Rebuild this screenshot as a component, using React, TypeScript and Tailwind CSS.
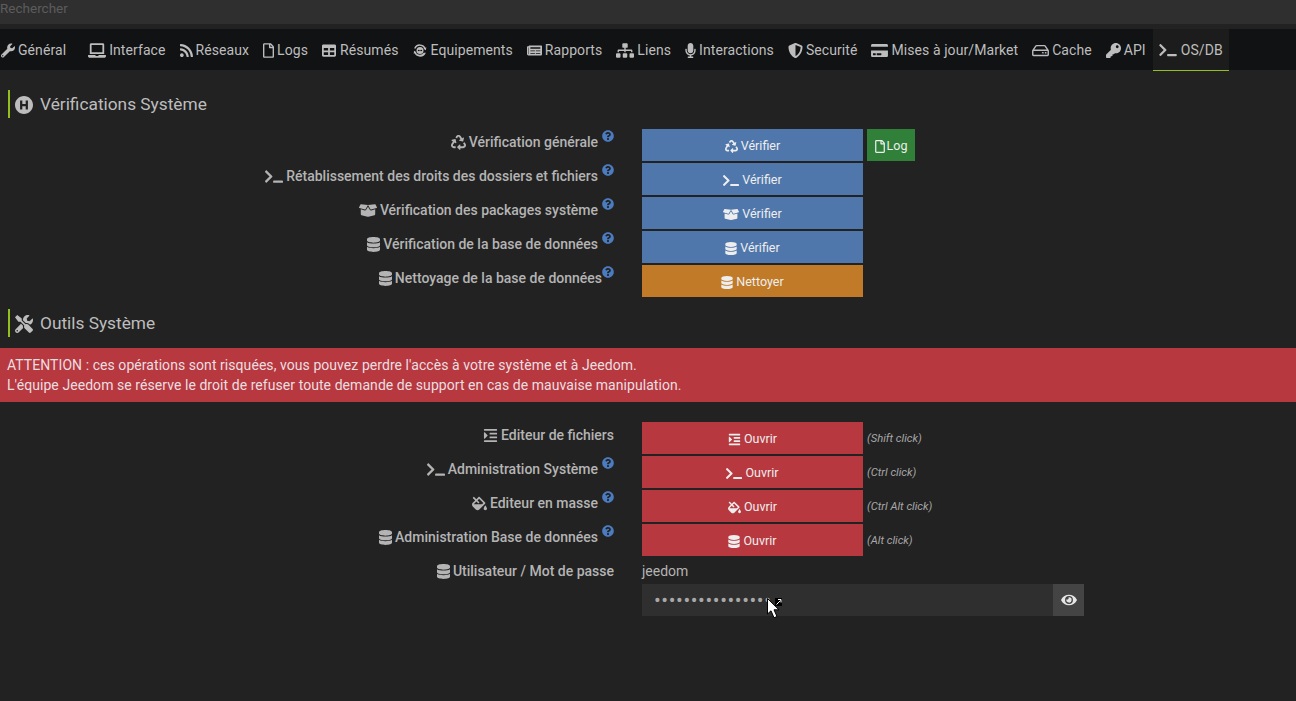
import type { IconType } from "react-icons";
import {
  FaBoxOpen,
  FaCreditCard,
  FaDatabase,
  FaEye,
  FaFillDrip,
  FaHospitalSymbol,
  FaIndent,
  FaKey,
  FaLaptop,
  FaMicrophone,
  FaNewspaper,
  FaQuestionCircle,
  FaRecycle,
  FaRegFile,
  FaRegHdd,
  FaRss,
  FaShieldAlt,
  FaSitemap,
  FaTable,
  FaTerminal,
  FaTools,
  FaWrench,
} from "react-icons/fa";

const EquipIcon: IconType = (props) => (
  <svg viewBox="0 0 16 16" fill="currentColor" {...props}>
    <path d="M8 1a7 7 0 0 1 6.2 3.8l1-.6-.4 3.4-3-1.6 1-.5A5.600 5.600 0 0 0 2.700 6L1.300 5.500A7 7 0 0 1 8 1zM8 15a7 7 0 0 1-6.200-3.800l-1 .6.4-3.400 3 1.600-1 .5a5.600 5.600 0 0 0 9.100 0L14.700 10.500A7 7 0 0 1 8 15z" />
    <circle cx="8" cy="8" r="4" />
    <circle cx="6.300" cy="8" r=".8" fill="#111214" />
    <circle cx="8" cy="8" r=".8" fill="#111214" />
    <circle cx="9.700" cy="8" r=".8" fill="#111214" />
  </svg>
);

const tabs: { label: string; icon: IconType; className: string; iconClass: string }[] = [
  { label: "Général", icon: FaWrench, className: "pl-[1px] pr-[15px]", iconClass: "w-[14px]" },
  { label: "Interface", icon: FaLaptop, className: "px-[7px]", iconClass: "w-[18px]" },
  { label: "Réseaux", icon: FaRss, className: "px-[7px]", iconClass: "w-[13px]" },
  { label: "Logs", icon: FaRegFile, className: "px-[7px]", iconClass: "w-[11px]" },
  { label: "Résumés", icon: FaTable, className: "px-[7px] gap-[4px]", iconClass: "w-[14px]" },
  { label: "Equipements", icon: EquipIcon, className: "px-[7px] gap-[4px]", iconClass: "w-[14px]" },
  { label: "Rapports", icon: FaNewspaper, className: "px-[7px]", iconClass: "w-[15px]" },
  { label: "Liens", icon: FaSitemap, className: "px-[7px]", iconClass: "w-[18px]" },
  { label: "Interactions", icon: FaMicrophone, className: "px-[7px]", iconClass: "w-[11px]" },
  { label: "Securité", icon: FaShieldAlt, className: "px-[7px]", iconClass: "w-[15px]" },
  { label: "Mises à jour/Market", icon: FaCreditCard, className: "px-[7px]", iconClass: "w-[17px]" },
  { label: "Cache", icon: FaRegHdd, className: "px-[7px]", iconClass: "w-[17px]" },
  { label: "API", icon: FaKey, className: "px-[7px]", iconClass: "w-[15px]" },
];

function Heading({ icon: Icon, title }: { icon: IconType; title: string }) {
  return (
    <div className="ml-2 flex h-[28px] items-center border-l-2 border-[#93c01f] pl-[5px] pt-[2px] text-[17.300px] text-[#bdbdbd]">
      <Icon className="mr-[7px] h-[18px] w-[18px]" />
      {title}
    </div>
  );
}

function iconWidth(Icon: IconType) {
  if (Icon === FaTerminal || Icon === FaBoxOpen) return "w-[18px]";
  if (Icon === FaDatabase) return "w-[13px]";
  return "w-[15px]";
}

function Row({
  icon: Icon,
  label,
  help,
  tight,
  children,
}: {
  icon: IconType;
  label: string;
  help?: boolean;
  tight?: boolean;
  children: React.ReactNode;
}) {
  return (
    <div className="flex h-[34px] items-start">
      <div className="flex h-[26px] w-[614px] items-center justify-end font-medium text-[#b4b4b4]">
        <Icon className={`mr-[3px] h-[15px] ${iconWidth(Icon)}`} />
        <span>{label}</span>
        {help && (
          <FaQuestionCircle
            className={`mb-[12px] h-[12px] w-[12px] text-[#4c7cc0] ${tight ? "ml-0" : "ml-[4px]"}`}
          />
        )}
      </div>
      <div className="ml-[28px]">{children}</div>
    </div>
  );
}

function btnIconWidth(Icon: IconType) {
  if (Icon === FaTerminal || Icon === FaBoxOpen) return "w-[16px]";
  if (Icon === FaDatabase) return "w-[12px]";
  return "w-[13px]";
}

function ActionButton({
  icon: Icon,
  label,
  color,
}: {
  icon: IconType;
  label: string;
  color: string;
}) {
  return (
    <button
      className={`flex h-[32px] w-[221px] items-center justify-center gap-[3px] pt-[3px] text-[12.500px] text-[#eeeeee] ${color}`}
    >
      <Icon className={`h-[13px] ${btnIconWidth(Icon)}`} />
      {label}
    </button>
  );
}

export default function App() {
  return (
    <div className="relative h-[701px] w-full overflow-hidden bg-[#222222] text-[14px] font-['Roboto',sans-serif] text-[#bdbdbd]">
      <div className="flex h-[24px] items-start bg-[#2f2f2f] text-[13.500px] leading-[17px] text-[#5c5c5c]">Rechercher</div>

      <nav className="mt-[5px] flex h-[41px] bg-[#111214] tracking-[0.080px]">
        {tabs.map(({ label, icon: Icon, className, iconClass }) => (
          <div key={label} className={`flex items-center gap-[3px] whitespace-nowrap pt-[1px] ${className}`}>
            <Icon className={`h-[15px] ${iconClass}`} />
            {label}
          </div>
        ))}
        <div className="flex h-[42px] items-center gap-[4px] border-b border-[#93c01f] bg-[#1c1c1c] px-[6px] pt-[1px]">
          <FaTerminal className="h-[14px] w-[18px]" />
          OS/DB
        </div>
      </nav>

      <div className="mt-[20px]">
        <Heading icon={FaHospitalSymbol} title="Vérifications Système" />
      </div>

      <div className="mt-[11px]">
        <Row icon={FaRecycle} label="Vérification générale" help>
          <div className="flex gap-[4px]">
            <ActionButton icon={FaRecycle} label="Vérifier" color="bg-[#5077ab]" />
            <button className="flex h-[32px] w-[48px] items-center justify-center gap-[2px] pt-[3px] text-[12.500px] text-[#eeeeee] bg-[#31803a]">
              <FaRegFile className="h-[13px] w-[10px]" />
              Log
            </button>
          </div>
        </Row>
        <Row icon={FaTerminal} label="Rétablissement des droits des dossiers et fichiers" help>
          <ActionButton icon={FaTerminal} label="Vérifier" color="bg-[#5077ab]" />
        </Row>
        <Row icon={FaBoxOpen} label="Vérification des packages système" help>
          <ActionButton icon={FaBoxOpen} label="Vérifier" color="bg-[#5077ab]" />
        </Row>
        <Row icon={FaDatabase} label="Vérification de la base de données" help>
          <ActionButton icon={FaDatabase} label="Vérifier" color="bg-[#5077ab]" />
        </Row>
        <Row icon={FaDatabase} label="Nettoyage de la base de données" help tight>
          <ActionButton icon={FaDatabase} label="Nettoyer" color="bg-[#c17a28]" />
        </Row>
      </div>

      <div className="mt-[10px]">
        <Heading icon={FaTools} title="Outils Système" />
      </div>

      <div className="mt-[11px] flex h-[54px] flex-col justify-center bg-[#b8383f] pl-[7px] leading-[20px] tracking-[0.060px] text-[#eadfe0]">
        <div>ATTENTION : ces opérations sont risquées, vous pouvez perdre l'accès à votre système et à Jeedom.</div>
        <div>L'équipe Jeedom se réserve le droit de refuser toute demande de support en cas de mauvaise manipulation.</div>
      </div>

      <div className="mt-[20px]">
        {[
          { icon: FaIndent, label: "Editeur de fichiers", hint: "(Shift click)", help: false },
          { icon: FaTerminal, label: "Administration Système", hint: "(Ctrl click)", help: true },
          { icon: FaFillDrip, label: "Editeur en masse", hint: "(Ctrl Alt click)", help: true },
          { icon: FaDatabase, label: "Administration Base de données", hint: "(Alt click)", help: true },
        ].map((r) => (
          <Row key={r.label} icon={r.icon} label={r.label} help={r.help}>
            <div className="flex h-[32px] items-center gap-[4px]">
              <ActionButton icon={r.icon} label="Ouvrir" color="bg-[#b8383f]" />
              <span className="pt-[2px] text-[11.200px] italic text-[#a8a8a8]">{r.hint}</span>
            </div>
          </Row>
        ))}
        <Row icon={FaDatabase} label="Utilisateur / Mot de passe">
          <div className="flex h-[26px] items-center text-[#b4b4b4]">jeedom</div>
          <div className="flex h-[32px] w-[442px]">
            <div className="flex flex-1 items-center bg-[#2f2f2f] pl-[12px] text-[20px] tracking-[0.600px] text-[#a8a8a8]">
              {"••••••••••••••••"}
            </div>
            <div className="flex w-[31px] items-center justify-center bg-[#444444] text-[#e6e6e6]">
              <FaEye className="h-[14px] w-[16px]" />
            </div>
          </div>
        </Row>
      </div>

      <svg className="absolute left-[766px] top-[597px]" width="18" height="24" viewBox="0 0 18 24">
        <path d="M1.500 1.500v15.500l3.500-3.200 3 7 3-1.300-3-6.700h5z" fill="#fff" stroke="#000" strokeWidth="1" />
        <rect x="9" y="1" width="7" height="8" fill="#000" />
        <path d="M10.500 7.500l4-4M12 2.500h3v3" fill="none" stroke="#fff" strokeWidth="1" />
      </svg>
    </div>
  );
}
